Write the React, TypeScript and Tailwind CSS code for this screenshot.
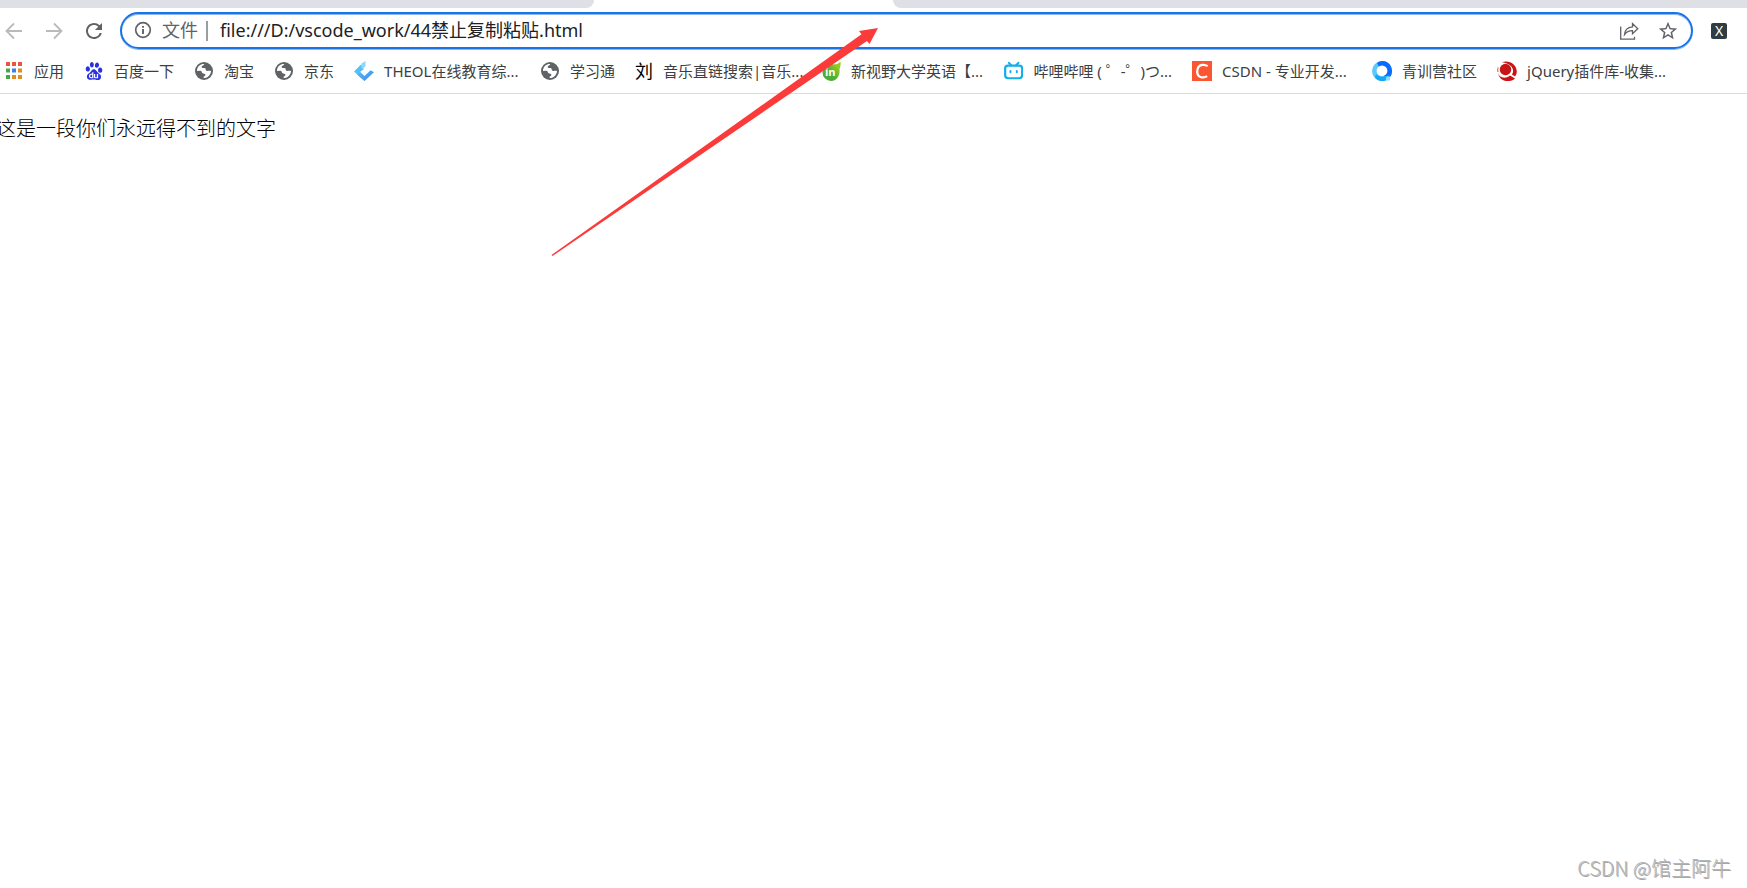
import type { ReactNode } from "react";
import { MdRefresh, MdStarBorder } from "react-icons/md";
import { SiBaidu } from "react-icons/si";

function AppsIcon() {
  const cells = [
    "#ea5440", "#ea5440", "#ea5440",
    "#4aa548", "#3b82e8", "#dd8f22",
    "#4aa548", "#dd8f22", "#dd8f22",
  ];
  return (
    <svg viewBox="0 0 20 20" className="h-5 w-5">
      {cells.map((fill, i) => (
        <rect
          key={i}
          x={2 + (i % 3) * 6}
          y={1 + Math.floor(i / 3) * 6.5}
          width="4"
          height="4"
          fill={fill}
        />
      ))}
    </svg>
  );
}

function GlobeIcon() {
  return (
    <svg viewBox="0 0 20 20" className="h-5 w-5">
      <circle cx="10" cy="10" r="9" fill="#5f6368" />
      <path
        fill="#fff"
        d="M3 10c0-3.200 2-6.200 5.500-7 .8-.1 1.500 0 1.800.4-.6.9-2.300 1.200-2.600 2.300-.2.900.8 1.500 2 1.300 1.400-.1 2.200.6 2 1.600-.1.900.6 1.400 1.600 1.400 1.400 0 2.300-.5 3.700 0-.1 3.400-2.700 6.500-6.200 7-1 .1-1.600-.2-1.300-.9.400-.8 1.800-.9 1.900-2 .1-1-.9-1.500-2-1.600-1-.1-1.400-.7-1.600-1.500-.2-.9-.9-1.200-2-1.200z"
      />
    </svg>
  );
}

function TheolIcon() {
  return (
    <svg viewBox="0 0 20 20" className="h-5 w-5">
      <defs>
        <linearGradient id="theol" x1="0" y1="0" x2="1" y2="1">
          <stop offset="0" stopColor="#58c4f8" />
          <stop offset="1" stopColor="#3f82ee" />
        </linearGradient>
      </defs>
      <path fill="#4fc3f9" d="M0 10.500 7 3.500l2.500 2v3L6 11l4.500 4.500V20z" />
      <path fill="url(#theol)" d="M3 13.500 6 11l4.500 4 6-5.800 3.500 2L10.500 20z" />
      <path fill="#8bdafb" d="M7.500 2.500 11.500 0v5l-2.500 3-1.500-1z" />
    </svg>
  );
}

function LiuIcon() {
  return (
    <span
      aria-hidden="true"
      className="block w-5 text-center text-lg leading-5 font-normal text-black"
    >
      刘
    </span>
  );
}

function UnipusIcon() {
  return (
    <svg viewBox="0 0 20 20" className="h-5 w-5">
      <defs>
        <linearGradient id="unipus" x1="0" y1="1" x2="1" y2="0">
          <stop offset="0.4" stopColor="#4bae36" />
          <stop offset="0.8" stopColor="#97ca25" />
        </linearGradient>
      </defs>
      <path
        fill="url(#unipus)"
        d="M10 3c2 0 3.500.5 5 .3 1.800-.3 3.200-1.300 4.500-2.800.3 3-.1 5.500-1 7.500.9 6-2.500 12-8.500 12a8.500 8.500 0 0 1 0-17z"
      />
      <text x="4" y="15" fontSize="11" fontWeight="700" fill="#fff" className="font-['Open_Sans',sans-serif]">
        in
      </text>
    </svg>
  );
}

function BilibiliIcon() {
  return (
    <svg viewBox="0 0 20 20" className="h-5 w-5">
      <rect x="1.200" y="4.500" width="17.600" height="13" rx="3" fill="none" stroke="#12aeec" strokeWidth="2.300" />
      <path
        d="M5 1.500 7.500 4M15 1.500 12.500 4"
        stroke="#12aeec"
        strokeWidth="2"
        strokeLinecap="round"
      />
      <path
        d="M6.700 10v1.300M13.300 10v1.300"
        stroke="#12aeec"
        strokeWidth="2"
        strokeLinecap="round"
      />
    </svg>
  );
}

function CsdnIcon() {
  return (
    <svg viewBox="0 0 20 20" className="h-5 w-5">
      <rect width="20" height="20" fill="#fc5531" />
      <path
        d="M15.700 5.200C12.500 3 7 3.200 5.700 7.500c-1.200 4.200-.3 7.800 3.300 8.700 2.200.5 4.500.1 6.200-1"
        fill="none"
        stroke="#fff"
        strokeWidth="2.200"
      />
    </svg>
  );
}

function QingxunIcon() {
  return (
    <svg viewBox="0 0 20 20" className="h-5 w-5">
      <circle cx="10" cy="10" r="10" fill="#5cc8fb" />
      <path fill="#0a6cff" d="M5 2a9 9 0 0 1 6-2c5.500.5 9 5 9 10 0 2-.6 4-1.500 5.500H12z" />
      <path fill="#12a8f5" d="M4 13c2 3 9 4 13 .5l-1 5C11 21.500 5 20 3 16.500z" />
      <rect x="14" y="15.500" width="4" height="4" rx="1" fill="#8bdcff" />
      <circle cx="10" cy="9.800" r="5.400" fill="#fff" />
    </svg>
  );
}

function JqueryIcon() {
  return (
    <svg viewBox="0 0 20 20" className="h-5 w-5">
      <circle cx="8.500" cy="8.500" r="5.700" fill="#c81414" />
      <path d="M5 1.200C12-1.200 19.500 3 19.800 10.500c-.1 2-.7 3.500-1.800 5L15 13.500C18 9 15 2.500 5 1.200z" fill="#c81414" />
      <path d="M1 12c1 4.500 7 6.500 12 2.500l5 3C13 22 2.500 21 1 12z" fill="#c81414" />
      <path d="M1.200 6.500C.6 8 .6 9.500 1 11" fill="none" stroke="#c81414" strokeWidth="0.800" />
    </svg>
  );
}

function ArrowIcon({ flip = false }: { flip?: boolean }) {
  return (
    <svg viewBox="0 0 20 20" className={flip ? "h-5 w-5 rotate-180" : "h-5 w-5"}>
      <path d="M18 10H2.500M10 2.500 2.500 10l7.500 7.500" fill="none" stroke="#bababa" strokeWidth="1.800" />
    </svg>
  );
}

function InfoIcon() {
  return (
    <svg viewBox="0 0 18 18" className="h-[18px] w-[18px]">
      <circle cx="9" cy="9" r="7.300" fill="none" stroke="#5f6368" strokeWidth="1.700" />
      <path d="M9 8v5M9 5v1.800" stroke="#5f6368" strokeWidth="1.900" />
    </svg>
  );
}

function ShareIcon() {
  return (
    <svg viewBox="0 0 20 20" className="h-5 w-5">
      <path
        d="M1.700 5.500v12.700H15.500v-2.500M5.500 13.500c.3-4.500 3-7.300 8-7.700V2.500l5.300 5.300-5.300 5V9.700c-3.500 0-6 1-8 3.800z"
        fill="none"
        stroke="#5f6368"
        strokeWidth="1.300"
      />
    </svg>
  );
}

const bookmarks: { label: string; icon: ReactNode; width?: string }[] = [
  { label: "应用", icon: <AppsIcon /> },
  { label: "百度一下", icon: <SiBaidu className="h-5 w-5 p-px text-[#2932e1]" /> },
  { label: "淘宝", icon: <GlobeIcon /> },
  { label: "京东", icon: <GlobeIcon /> },
  { label: "THEOL在线教育综...", icon: <TheolIcon />, width: "w-[166px]" },
  { label: "学习通", icon: <GlobeIcon /> },
  { label: "音乐直链搜索|音乐...", icon: <LiuIcon />, width: "w-[166px]" },
  { label: "新视野大学英语【...", icon: <UnipusIcon />, width: "w-[163px]" },
  { label: "哔哩哔哩 ( ゜-゜)つ...", icon: <BilibiliIcon />, width: "w-[168px]" },
  { label: "CSDN - 专业开发...", icon: <CsdnIcon />, width: "w-[160px]" },
  { label: "青训营社区", icon: <QingxunIcon /> },
  { label: "jQuery插件库-收集...", icon: <JqueryIcon /> },
];

function TabStrip() {
  return (
    <div className="flex h-2 bg-white">
      <div className="w-[594px] rounded-br-lg bg-[#dfe0e5]" />
      <div className="w-[299px]" />
      <div className="flex-1 rounded-bl-lg bg-[#dfe0e5]" />
    </div>
  );
}

function Toolbar() {
  return (
    <div className="flex items-center gap-3 pt-1 pr-5">
      <button type="button" aria-label="后退" className="flex w-7 justify-center">
        <ArrowIcon />
      </button>
      <button type="button" aria-label="前进" className="flex w-7 justify-center">
        <ArrowIcon flip />
      </button>
      <button type="button" aria-label="重新加载" className="flex w-7 justify-center">
        <MdRefresh className="h-6 w-6 text-[#5f6368]" />
      </button>

      <div className="flex h-[37px] min-w-0 flex-1 items-center rounded-full border-2 border-[#1a73e8] pr-3 pl-3 shadow-[inset_0_1px_0_#8cb9f3,0_1px_0_#8cb9f3]">
        <button type="button" className="flex shrink-0 items-center gap-2.5 pb-0.5 text-lg leading-6 text-[#5f6368]">
          <InfoIcon />
          文件
        </button>
        <span className="mx-2 h-5 w-0.5 shrink-0 bg-[#9a9da1]" />
        <input
          type="text"
          aria-label="地址栏"
          defaultValue="file:///D:/vscode_work/44禁止复制粘贴.html"
          className="min-w-0 flex-1 bg-transparent pb-0.5 pl-1 text-lg leading-6 text-[#202124] outline-none"
        />
        <div className="flex items-center gap-4.5">
          <button type="button" aria-label="分享此页">
            <ShareIcon />
          </button>
          <button type="button" aria-label="为此网页添加书签">
            <MdStarBorder className="h-[22px] w-[22px] text-[#5f6368]" />
          </button>
        </div>
      </div>

      <button
        type="button"
        className="ml-1.5 flex h-4 w-4 items-center justify-center rounded-xs bg-[#2f3d42] text-sm leading-4 text-white"
      >
        X
      </button>
    </div>
  );
}

function BookmarkBar() {
  return (
    <nav className="flex h-[45px] items-center gap-5 overflow-hidden border-b border-[#dadce0] pl-1">
      {bookmarks.map((b) => (
        <a
          key={b.label}
          href="#"
          className={`flex shrink-0 items-center gap-2.5 text-[15px] leading-5 whitespace-nowrap text-[#3c4043] ${b.width ?? ""}`}
        >
          {b.icon}
          {b.label}
        </a>
      ))}
    </nav>
  );
}

function RedArrow() {
  return (
    <svg
      aria-hidden="true"
      viewBox="0 0 328 230"
      className="pointer-events-none absolute top-[27px] left-[551px] h-[230px] w-[328px]"
    >
      <path fill="#fb3b3a" d="M.5 228 310.500 7.300 308 4l19-3-8.500 16-2.500-3L1.500 229z" />
    </svg>
  );
}

export default function App() {
  return (
    <div className="relative flex min-h-screen flex-col overflow-hidden bg-white font-['Noto_Sans','Noto_Sans_CJK_SC',sans-serif] font-normal">
      <header>
        <TabStrip />
        <Toolbar />
        <BookmarkBar />
      </header>
      <main className="flex-1 pt-5">
        <p className="-ml-1 text-xl leading-[30px] font-light text-black">这是一段你们永远得不到的文字</p>
      </main>
      <footer className="pr-4 pb-1.5 text-right font-['Noto_Sans_CJK_SC',sans-serif] text-xl leading-7 font-light text-[#b5b5b5] [text-shadow:1px_1px_0_#a8a8a8]">
        CSDN @馆主阿牛
      </footer>
      <RedArrow />
    </div>
  );
}
